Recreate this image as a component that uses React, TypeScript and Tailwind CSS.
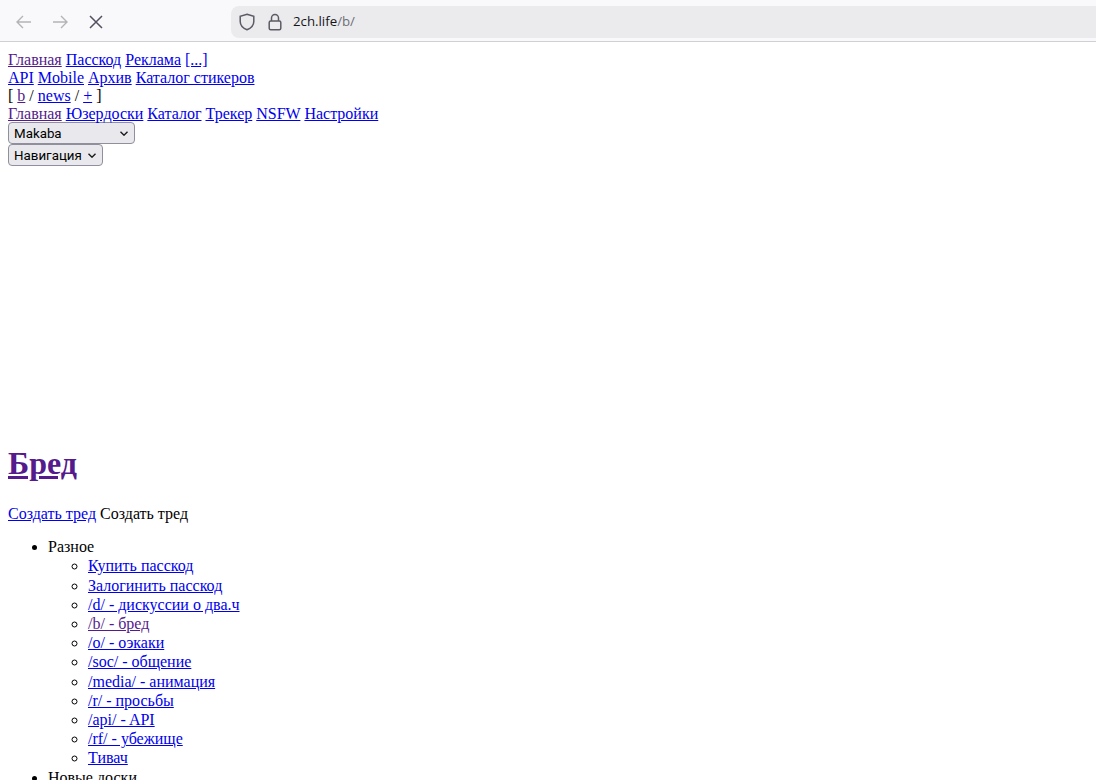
import React from "react";

const Link = ({ children, visited }: { children: React.ReactNode; visited?: boolean }) => (
  <a href="#" className={visited ? "text-[#551a8b] underline" : "text-[#0000ee] underline"}>
    {children}
  </a>
);

const Chevron = () => (
  <svg width="8" height="5" viewBox="0 0 8 5" fill="none" stroke="#1a1a1a" strokeWidth="1.4">
    <path d="M.5.7L4 4.200 7.500.7" />
  </svg>
);

const FakeSelect = ({ label, className }: { label: string; className: string }) => (
  <div
    className={`flex h-[22px] items-center justify-between rounded-[4px] border border-[#8f8f9d] bg-[#e9e9ed] pl-[5px] pr-[6px] font-['Roboto',sans-serif] text-[13.33px] text-black ${className}`}
  >
    <span className="pt-[1px]">{label}</span>
    <Chevron />
  </div>
);

const subItems: { label: string; visited?: boolean }[] = [
  { label: "Купить пасскод" },
  { label: "Залогинить пасскод" },
  { label: "/d/ - дискуссии о два.ч" },
  { label: "/b/ - бред", visited: true },
  { label: "/o/ - оэкаки" },
  { label: "/soc/ - общение" },
  { label: "/media/ - анимация" },
  { label: "/r/ - просьбы" },
  { label: "/api/ - API" },
  { label: "/rf/ - убежище" },
  { label: "Тивач" },
];

export default function App() {
  return (
    <div className="h-[780px] w-full overflow-hidden bg-white font-['Liberation_Serif',serif] text-base text-black">
      <header className="flex h-[42px] items-center border-b border-[#cfcfd8] bg-[#f9f9fb] pb-[1px] pt-[3px]">
        <div className="flex w-[231px] items-center pl-[15px]">
          <svg width="18" height="16" viewBox="0 0 18 16" fill="none" stroke="#b4b4b8" strokeWidth="1.4" className="mr-[18px]">
            <path d="M16 8H2M8 2L2 8l6 6" />
          </svg>
          <svg width="18" height="16" viewBox="0 0 18 16" fill="none" stroke="#b4b4b8" strokeWidth="1.4" className="mr-[20px]">
            <path d="M2 8h14M10 2l6 6-6 6" />
          </svg>
          <svg width="14" height="14" viewBox="0 0 14 14" fill="none" stroke="#52525e" strokeWidth="1.5">
            <path d="M1 1l12 12M13 1L1 13" />
          </svg>
        </div>
        <div className="flex h-[32px] flex-1 items-center rounded-l-[8px] bg-[#ebebed] pl-[8px] font-['Open_Sans',sans-serif] text-[13.25px]">
          <svg width="16" height="18" viewBox="0 0 16 18" fill="none" stroke="#5b5b66" strokeWidth="1.5" className="mr-[12px]">
            <path d="M8 1.2l6.8 2.2v5c0 3.8-3 6.7-6.8 8.3C4.200 15.100 1.200 12.200 1.200 8.400v-5z" />
          </svg>
          <svg width="14" height="18" viewBox="0 0 14 18" fill="none" stroke="#5b5b66" strokeWidth="1.5" className="mr-[11px] ml-[1px]">
            <path d="M3.500 8V5a3.500 3.500 0 017 0v3" />
            <rect x="1.200" y="8" width="11.600" height="8.800" rx="1.500" />
          </svg>
          <span className="text-[#15141a]">2ch.life</span>
          <span className="text-[#6f6f78]">/b/</span>
        </div>
      </header>

      <main className="px-2 pt-[9px]">
        <div className="leading-[18px]">
          <div>
            <Link visited>Главная</Link> <Link>Пасскод</Link> <Link>Реклама</Link> <Link>[...]</Link>
          </div>
          <div>
            <Link>API</Link> <Link>Mobile</Link> <Link>Архив</Link> <Link>Каталог стикеров</Link>
          </div>
          <div>
            [ <Link visited>b</Link> / <Link>news</Link> / <Link>+</Link> ]
          </div>
          <div>
            <Link visited>Главная</Link> <Link>Юзердоски</Link> <Link>Каталог</Link> <Link>Трекер</Link>{" "}
            <Link>NSFW</Link> <Link>Настройки</Link>
          </div>
        </div>
        <div className="-mt-[1px]">
          <FakeSelect label="Makaba" className="w-[127px]" />
          <FakeSelect label="Навигация" className="w-[95px]" />
        </div>

        <h1 className="mt-[279px] text-[32px] font-bold leading-[37px]">
          <Link visited>Бред</Link>
        </h1>

        <p className="mt-[23px] leading-[18px]">
          <Link>Создать тред</Link> Создать тред
        </p>

        <ul className="mt-[14.2px] list-disc pl-10 leading-[19.2px]">
          <li>
            Разное
            <ul className="list-[circle] pl-10">
              {subItems.map((item) => (
                <li key={item.label}>
                  <Link visited={item.visited}>{item.label}</Link>
                </li>
              ))}
            </ul>
          </li>
          <li>Новые доски</li>
        </ul>
      </main>
    </div>
  );
}
